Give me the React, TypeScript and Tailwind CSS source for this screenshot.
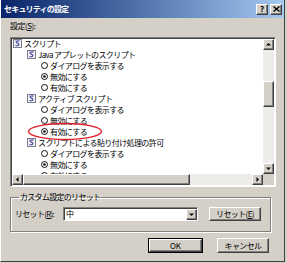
import React from "react";

// classic Win2000 raised border
const raised =
  "border border-t-white border-l-white border-r-[#404040] border-b-[#404040] shadow-[inset_-1px_-1px_0_#808080] bg-[#d4d0c8]";
const sunken =
  "border border-t-[#808080] border-l-[#808080] border-r-white border-b-white shadow-[inset_1px_1px_0_#404040]";

type Row =
  | { kind: "cat"; level: 1 | 2; label: string }
  | { kind: "radio"; label: string; on: boolean };

const rows: Row[] = [
  { kind: "cat", level: 1, label: "スクリプト" },
  { kind: "cat", level: 2, label: "Java アプレットのスクリプト" },
  { kind: "radio", label: "ダイアログを表示する", on: false },
  { kind: "radio", label: "無効にする", on: true },
  { kind: "radio", label: "有効にする", on: false },
  { kind: "cat", level: 2, label: "アクティブ スクリプト" },
  { kind: "radio", label: "ダイアログを表示する", on: false },
  { kind: "radio", label: "無効にする", on: false },
  { kind: "radio", label: "有効にする", on: true },
  { kind: "cat", level: 2, label: "スクリプトによる貼り付け処理の許可" },
  { kind: "radio", label: "ダイアログを表示する", on: false },
  { kind: "radio", label: "無効にする", on: true },
  { kind: "radio", label: "有効にする", on: false },
];

function ScriptIcon() {
  return (
    <svg width="9" height="9" viewBox="0 0 9 9" className="shrink-0">
      <rect x="0.5" y="0.5" width="8" height="8" fill="#f4f4f4" stroke="#7a7a8a" />
      <path d="M6.5 2.2 C5.5 1.6 3 1.8 3.2 3.2 C3.4 4.4 6 4.2 5.9 5.6 C5.8 7 3.3 7 2.3 6.4" fill="none" stroke="#3a3f9a" strokeWidth="1.1" />
      <path d="M2 2 L4 2" stroke="#7f7fc0" strokeWidth="0.8" />
    </svg>
  );
}

function Radio({ on }: { on: boolean }) {
  return (
    <svg width="7" height="7" viewBox="0 0 7 7" className="shrink-0">
      <circle cx="3.5" cy="3.5" r="3" fill="white" stroke="#111" strokeWidth="1" />
      {on && <circle cx="3.5" cy="3.5" r="1.3" fill="#111" />}
    </svg>
  );
}

function Arrow({ dir }: { dir: "up" | "down" | "left" | "right" }) {
  const pts = {
    up: "1,4.5 3.5,2 6,4.5",
    down: "1,2.5 3.5,5 6,2.5",
    left: "4.5,1 2,3.5 4.5,6",
    right: "2.5,1 5,3.5 2.5,6",
  }[dir];
  return (
    <div className={`w-[11px] h-[11px] flex items-center justify-center ${raised}`}>
      <svg width="7" height="7" viewBox="0 0 7 7">
        <polygon points={pts} fill="black" />
      </svg>
    </div>
  );
}

export default function App() {
  return (
    <div
      className="w-[287px] h-[263px] bg-[#d4d0c8] overflow-hidden text-black"
      style={{ fontFamily: '"Noto Sans CJK JP", "Noto Sans", sans-serif' }}
    >
      <div className="w-[285px] h-[262px] relative border-r border-b border-r-[#404040] border-b-[#404040] border-l border-l-white">
        {/* title bar */}
        <div className="h-[18px] flex items-center justify-between bg-gradient-to-r from-[#0a246a] to-[#a6caf0] pl-[3px] pr-[2px]">
          <span className="text-white font-bold text-[8px] tracking-[-0.8px] leading-[10px]">セキュリティの設定</span>
          <div className="flex gap-[2px]">
            <div className={`w-[12px] h-[11px] flex items-center justify-center text-[8px] font-bold leading-none ${raised}`}>?</div>
            <div className={`w-[12px] h-[11px] flex items-center justify-center ${raised}`}>
              <svg width="7" height="6" viewBox="0 0 7 6">
                <path d="M0.5 0.5 L6.5 5.5 M6.5 0.5 L0.5 5.5" stroke="black" strokeWidth="1.4" />
              </svg>
            </div>
          </div>
        </div>

        <div className="pl-[9px]">
          <div className="mt-[3px] h-[10px] leading-[10px] text-[8px] tracking-[-0.5px]">
            設定(<span className="underline">S</span>):
          </div>

          {/* list box */}
          <div className={`mt-[6px] w-[266px] h-[150px] p-[1px] bg-white ${sunken} flex flex-col`}>
            <div className="flex flex-1 min-h-0">
              <div className="flex-1 overflow-hidden relative">
                <div className="flex flex-col -mt-[1px]">
                  {rows.map((r, i) =>
                    r.kind === "cat" ? (
                      <div
                        key={i}
                        className={`h-[11px] flex items-center gap-[2px] text-[8px] tracking-[-0.6px] whitespace-nowrap ${r.level === 1 ? "pl-[1px]" : "pl-[15px]"}`}
                      >
                        <ScriptIcon />
                        <span className="leading-[11px]">{r.label}</span>
                      </div>
                    ) : (
                      <div key={i} className="h-[11px] flex items-center gap-[2px] pl-[29px] text-[8px] tracking-[-0.6px] whitespace-nowrap">
                        <Radio on={r.on} />
                        <span className="leading-[11px]">{r.label}</span>
                      </div>
                    )
                  )}
                </div>
                {/* red marker ellipse */}
                <svg className="absolute left-[15px] top-[83px]" width="76" height="19" viewBox="0 0 76 19">
                  <ellipse cx="38" cy="9.5" rx="36.5" ry="8" fill="none" stroke="#e0202a" strokeWidth="1.4" />
                </svg>
              </div>
              {/* vertical scrollbar */}
              <div className="w-[11px] flex flex-col bg-[#eeece8]">
                <Arrow dir="up" />
                <div className="flex-1 flex flex-col">
                  <div className="h-[31px]" />
                  <div className={`h-[26px] ${raised}`} />
                </div>
                <Arrow dir="down" />
              </div>
            </div>
            {/* horizontal scrollbar */}
            <div className="h-[11px] flex">
              <div className="flex-1 flex bg-[#eeece8]">
                <Arrow dir="left" />
                <div className={`w-[167px] ${raised}`} />
                <div className="flex-1" />
                <Arrow dir="right" />
              </div>
              <div className="w-[11px] bg-[#d4d0c8]" />
            </div>
          </div>

          {/* reset group */}
          <fieldset className="mt-[5px] w-[260px] border border-[#808080] shadow-[1px_1px_0_white,inset_1px_1px_0_white] pl-[4px] pr-[9px] pb-[10px]">
            <legend className="ml-[4px] px-[1px] text-[8px] tracking-[-0.7px] leading-[10px]">カスタム設定のリセット</legend>
            <div className="mt-[5px] flex items-center">
              <span className="w-[48px] text-[8px] tracking-[-0.7px] leading-[10px]">
                リセット(<span className="underline">R</span>):
              </span>
              <div className={`w-[135px] h-[14px] bg-white ${sunken} flex items-center`}>
                <span className="flex-1 pl-[2px] text-[8px] leading-[10px]">中</span>
                <Arrow dir="down" />
              </div>
              <div className={`ml-[11px] w-[52px] h-[14px] flex items-center justify-center text-[8px] tracking-[-0.6px] leading-[10px] ${raised}`}>
                リセット(<span className="underline">E</span>)
              </div>
            </div>
          </fieldset>

          {/* dialog buttons */}
          <div className="mt-[6px] flex pl-[138px] gap-[14px]">
            <div className="w-[55px] h-[15px] border border-black">
              <div className={`w-full h-full flex items-center justify-center text-[8px] leading-[10px] ${raised}`}>OK</div>
            </div>
            <div className={`w-[52px] h-[15px] flex items-center justify-center text-[8px] tracking-[-0.6px] leading-[10px] ${raised}`}>
              キャンセル
            </div>
          </div>
        </div>
      </div>
    </div>
  );
}
